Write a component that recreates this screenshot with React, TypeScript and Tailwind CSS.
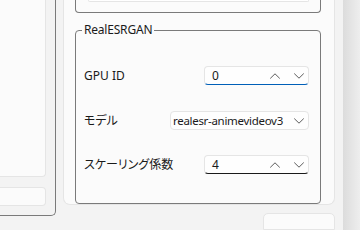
const Chevron = ({ up }: { up?: boolean }) => (
  <svg width="10" height="6" viewBox="0 0 10 6" fill="none" stroke="#5c5c5c" strokeWidth="1" strokeLinecap="round" strokeLinejoin="round">
    {up ? <polyline points="0.5,5.2 5,0.8 9.5,5.2" /> : <polyline points="0.5,0.8 5,5.2 9.5,0.8" />}
  </svg>
);

function NumberBox({ value, focused }: { value: string; focused?: boolean }) {
  return (
    <div
      className={`flex items-center h-[19px] w-[105px] rounded-[4px] border border-[#e5e5e5] bg-[#fefefe] pl-[7px] pr-[4px] ${
        focused ? 'border-b-[#005fb8]' : 'border-b-[#1a1a1a]'
      }`}
    >
      <span className="flex-1 text-[12px] leading-none">{value}</span>
      <Chevron up />
      <span className="w-[14px]" />
      <Chevron />
    </div>
  );
}

export default function App() {
  return (
    <div className="w-[360px] h-[230px] overflow-hidden bg-[#f3f3f3] flex font-['Noto_Sans','Noto_Sans_CJK_JP',sans-serif] text-[#1a1a1a]">
      {/* left group, cropped */}
      <div className="w-[56px] shrink-0 h-[216px] border-r border-b border-[#7a7a7a] rounded-br-[5px] pr-[9px] flex flex-col">
        <div className="h-[177px] bg-[#fbfbfb] border-r border-b border-[#e5e5e5] rounded-br-[4px]" />
        <div className="mt-[10px] h-[19px] bg-[#fbfbfb] border-y border-r border-[#e5e5e5] rounded-r-[4px]" />
      </div>

      {/* settings column */}
      <div className="ml-[7px] w-[272px] shrink-0 flex flex-col">
        <div className="h-[218px] bg-[#fbfbfb] border-x border-b border-[#e5e5e5] rounded-b-[7px] pl-[11px] pr-[13px] flex flex-col">
          <div className="h-[13px] border-x border-b border-[#7a7a7a] rounded-b-[4px] pl-[12px] pr-[11px]">
            <div className="h-[2px] bg-white border-x border-b border-[#e5e5e5] rounded-b-[3px]" />
          </div>

          <fieldset className="mt-[9px] h-[182px] border border-[#7a7a7a] rounded-[4px] flex flex-col">
            <legend className="ml-[6px] px-[2px] text-[12px] leading-[16px] tracking-[-0.2px]">RealESRGAN</legend>

            <div className="mt-[28px] h-[19px] flex items-center justify-between pl-[8px] pr-[11px]">
              <span className="text-[12px]">GPU ID</span>
              <NumberBox value="0" focused />
            </div>

            <div className="mt-[26px] h-[19px] flex items-center justify-between pl-[8px] pr-[11px]">
              <span className="text-[12px] [font-feature-settings:'palt']">モデル</span>
              <div className="flex items-center h-[19px] w-[139px] rounded-[4px] border border-[#e5e5e5] bg-[#fefefe] pl-[2px] pr-[4px]">
                <span className="flex-1 text-[11.5px] leading-none tracking-[-0.3px] whitespace-nowrap">realesr-animevideov3</span>
                <Chevron />
              </div>
            </div>

            <div className="mt-[25px] h-[19px] flex items-center justify-between pl-[8px] pr-[11px]">
              <span className="text-[12px] [font-feature-settings:'palt']">スケーリング係数</span>
              <NumberBox value="4" />
            </div>
          </fieldset>
        </div>

        <div className="mt-[8px] ml-[200px] w-[72px] h-[20px] bg-[#fbfbfb] border border-[#e5e5e5] rounded-t-[5px]" />
      </div>

      <div className="ml-[8px] w-[17px] shrink-0 bg-gradient-to-r from-[#dcdcdc] to-[#eeeeee]" />
    </div>
  );
}
